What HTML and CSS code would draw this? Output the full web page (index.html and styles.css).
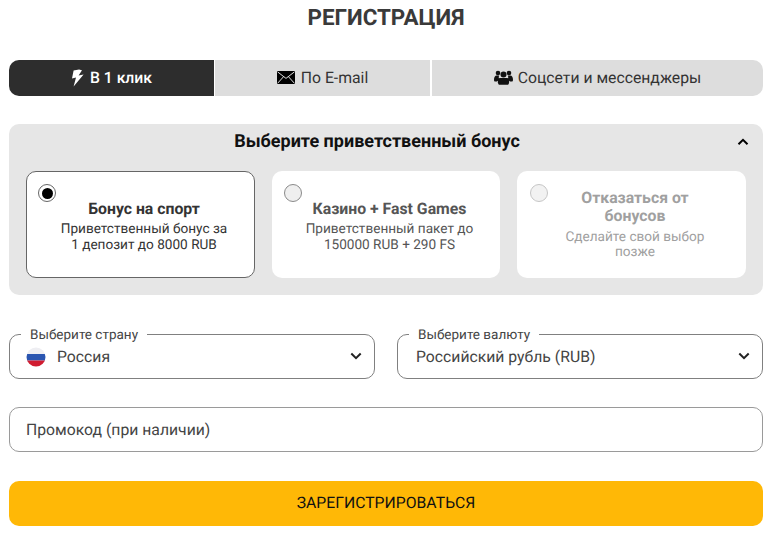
FILE: index.html
```html
<!DOCTYPE html>
<html lang="ru">
<head>
<meta charset="utf-8">
<title>Регистрация</title>
<link rel="stylesheet" href="styles.css">
</head>
<body>
<main class="page">
  <h1 class="title">РЕГИСТРАЦИЯ</h1>
  <nav class="tabs">
    <div class="tab tab-one active">
      <svg class="ico" width="14" height="18" viewBox="0 0 14 18"><path d="M8 0.5 L2.6 1.6 L1 9.6 L5 8.6 L2.6 17.5 L12.6 5.6 L7.6 6.6 L11 1.2 Z" fill="#fff"/></svg>
      <span>В 1 клик</span>
    </div>
    <div class="tab tab-two">
      <svg class="ico" width="18" height="13" viewBox="0 0 18 13"><path d="M0 0h18v13H0z" fill="#000"/><path d="M0.5 0.8 L9 7.4 L17.5 0.8 M0.5 12.4 L6.6 5.6 M17.5 12.4 L11.4 5.6" fill="none" stroke="#ddd" stroke-width="1"/></svg>
      <span>По E-mail</span>
    </div>
    <div class="tab tab-three">
      <svg class="ico" width="19" height="15" viewBox="0 0 19 15" fill="#111"><circle cx="4" cy="3" r="2.3"/><circle cx="15" cy="3" r="2.3"/><circle cx="9.5" cy="4.6" r="3"/><path d="M0 10c0-3 1-4.600 2.800-4.600h2.400c-.6 1-.6 2.800.1 4L3 11.500H1c-.6 0-1-.6-1-1.500zM19 10c0-3-1-4.600-2.800-4.600h-2.400c.6 1 .6 2.800-.1 4l2.300 2.100h2c.6 0 1-.6 1-1.500z"/><path d="M5.800 8h7.400c1.200 0 1.900 1.400 1.900 4.200 0 1.600-.8 2.600-2 2.600H5.900c-1.200 0-2-1-2-2.600C3.900 9.400 4.600 8 5.800 8z"/></svg>
      <span>Соцсети и мессенджеры</span>
    </div>
  </nav>

  <section class="panel">
    <header class="panel-head">
      <h2 class="panel-title">Выберите приветственный бонус</h2>
      <svg class="panel-chevron" width="12" height="8" viewBox="0 0 12 8"><path d="M1.500 6.300 L6 1.800 L10.500 6.300" fill="none" stroke="#000" stroke-width="2"/></svg>
    </header>
    <div class="cards">
      <article class="card selected">
        <span class="radio"></span>
        <h3 class="card-title">Бонус на спорт</h3>
        <p class="card-text">Приветственный бонус за<br>1 депозит до 8000 RUB</p>
      </article>
      <article class="card">
        <span class="radio"></span>
        <h3 class="card-title">Казино + Fast Games</h3>
        <p class="card-text">Приветственный пакет до<br>150000 RUB + 290 FS</p>
      </article>
      <article class="card muted">
        <span class="radio"></span>
        <h3 class="card-title">Отказаться от<br>бонусов</h3>
        <p class="card-text">Сделайте свой выбор<br>позже</p>
      </article>
    </div>
  </section>

  <div class="selects">
    <div class="field">
      <span class="legend">Выберите страну</span>
      <svg class="flag" width="20" height="20" viewBox="0 0 20 20"><defs><clipPath id="flag-clip"><circle cx="10" cy="10" r="9.500"/></clipPath></defs><g clip-path="url(#flag-clip)"><rect width="20" height="7" fill="#eeeef2"/><rect y="7" width="20" height="6.500" fill="#2a55b0"/><rect y="13.500" width="20" height="6.500" fill="#d01c30"/></g></svg>
      <span class="value">Россия</span>
      <svg class="chevron" width="12" height="8" viewBox="0 0 12 8"><path d="M1.300 1.500 L6 6.200 L10.700 1.500" fill="none" stroke="#222" stroke-width="2"/></svg>
    </div>
    <div class="field field-plain">
      <span class="legend">Выберите валюту</span>
      <span class="value">Российский рубль (RUB)</span>
      <svg class="chevron" width="12" height="8" viewBox="0 0 12 8"><path d="M1.300 1.500 L6 6.200 L10.700 1.500" fill="none" stroke="#222" stroke-width="2"/></svg>
    </div>
  </div>

  <div class="promo">Промокод (при наличии)</div>
  <button class="submit" type="button">ЗАРЕГИСТРИРОВАТЬСЯ</button>
</main>
</body>
</html>
```
FILE: styles.css
```css
* { box-sizing: border-box; }
html, body { margin: 0; padding: 0; background: #fff; }
body { font-family: Roboto, "Noto Sans", sans-serif; color: #333; text-rendering: geometricPrecision; }
.page { width: 773px; height: 543px; padding: 0 10px 0 9px; overflow: hidden; }
.title { margin: 0; height: 60px; padding-top: 4px; font-size: 22.4px; line-height: 28px; font-weight: 700; text-align: center; color: #3a3a3a; }
.tabs { display: flex; height: 36px; gap: 1px; }
.tab { display: flex; align-items: center; justify-content: center; gap: 5px; padding-bottom: 1px; background: #ddd; font-size: 15.75px; color: #333; }
.tab-one { width: 205px; border-radius: 10px 0 0 10px; }
.tab-two { width: 215px; gap: 6px; }
.tab-three { flex: 1; margin-left: 1px; border-radius: 0 10px 10px 0; }
.active { background: #2d2d2d; color: #fff; font-weight: 500; }
.ico { flex: none; }
.panel { margin-top: 28px; height: 171px; padding: 0 17px; background: #e6e6e6; border-radius: 10px; }
.panel-head { position: relative; height: 47px; padding: 6px 18px 0 0; display: flex; justify-content: center; }
.panel-title { margin: 0; font-size: 18px; line-height: 24px; font-weight: 700; color: #111; }
.panel-chevron { position: absolute; right: -3px; top: 14px; }
.cards { display: grid; grid-template-columns: 229px 228px 229px; column-gap: 17px; height: 107px; }
.card { position: relative; padding: 28px 16px 0 23px; background: #fff; border-radius: 10px; text-align: center; }
.card.selected { border: 1px solid #666; padding: 27px 15px 0 22px; }
.card-title { margin: 0; font-size: 15.8px; line-height: 19px; font-weight: 700; color: #555; }
.selected .card-title { color: #333; }
.card-text { margin: 3px 0 0; font-size: 13.6px; line-height: 16px; font-weight: 400; color: #555; }
.selected .card-text { color: #333; }
.muted { padding-top: 18px; }
.muted .card-title { line-height: 18px; color: #a0a0a0; }
.muted .card-text { margin-top: 5px; line-height: 15px; color: #a0a0a0; }
.radio { position: absolute; left: 12px; top: 13px; width: 18px; height: 18px; border-radius: 50%; border: 1px solid #8a8a8a; background: #efefef; }
.selected .radio { left: 11px; top: 12px; background: #000; border: 1px solid #666; background-clip: content-box; padding: 2.5px; }
.muted .radio { left: 13px; border-color: #c6c6c6; background: #f2f2f2; }
.selects { display: grid; grid-template-columns: 1fr 1fr; gap: 22px; margin-top: 39px; }
.field { position: relative; height: 45px; display: flex; align-items: center; padding: 0 16px; border: 1px solid #808080; border-radius: 10px; }
.field-plain { padding-left: 18px; }
.legend { position: absolute; left: 11px; top: -8px; padding: 0 9px; background: #fff; font-size: 13.5px; line-height: 16px; color: #444; }
.flag { flex: none; margin-right: 11px; }
.value { font-size: 15.75px; line-height: 20px; color: #444; }
.chevron { margin-left: auto; margin-right: -4px; margin-top: -2px; }
.promo { margin-top: 28px; height: 45px; display: flex; align-items: center; padding: 0 16px; border: 1px solid #9a9a9a; border-radius: 10px; font-size: 15.75px; color: #444; }
.submit { display: block; width: 100%; height: 45px; margin-top: 29px; padding: 0 0 2px; border: 0; border-radius: 10px; background: #ffb806; color: #111; font-family: Roboto, sans-serif; font-size: 15.75px; text-rendering: geometricPrecision; }
```
